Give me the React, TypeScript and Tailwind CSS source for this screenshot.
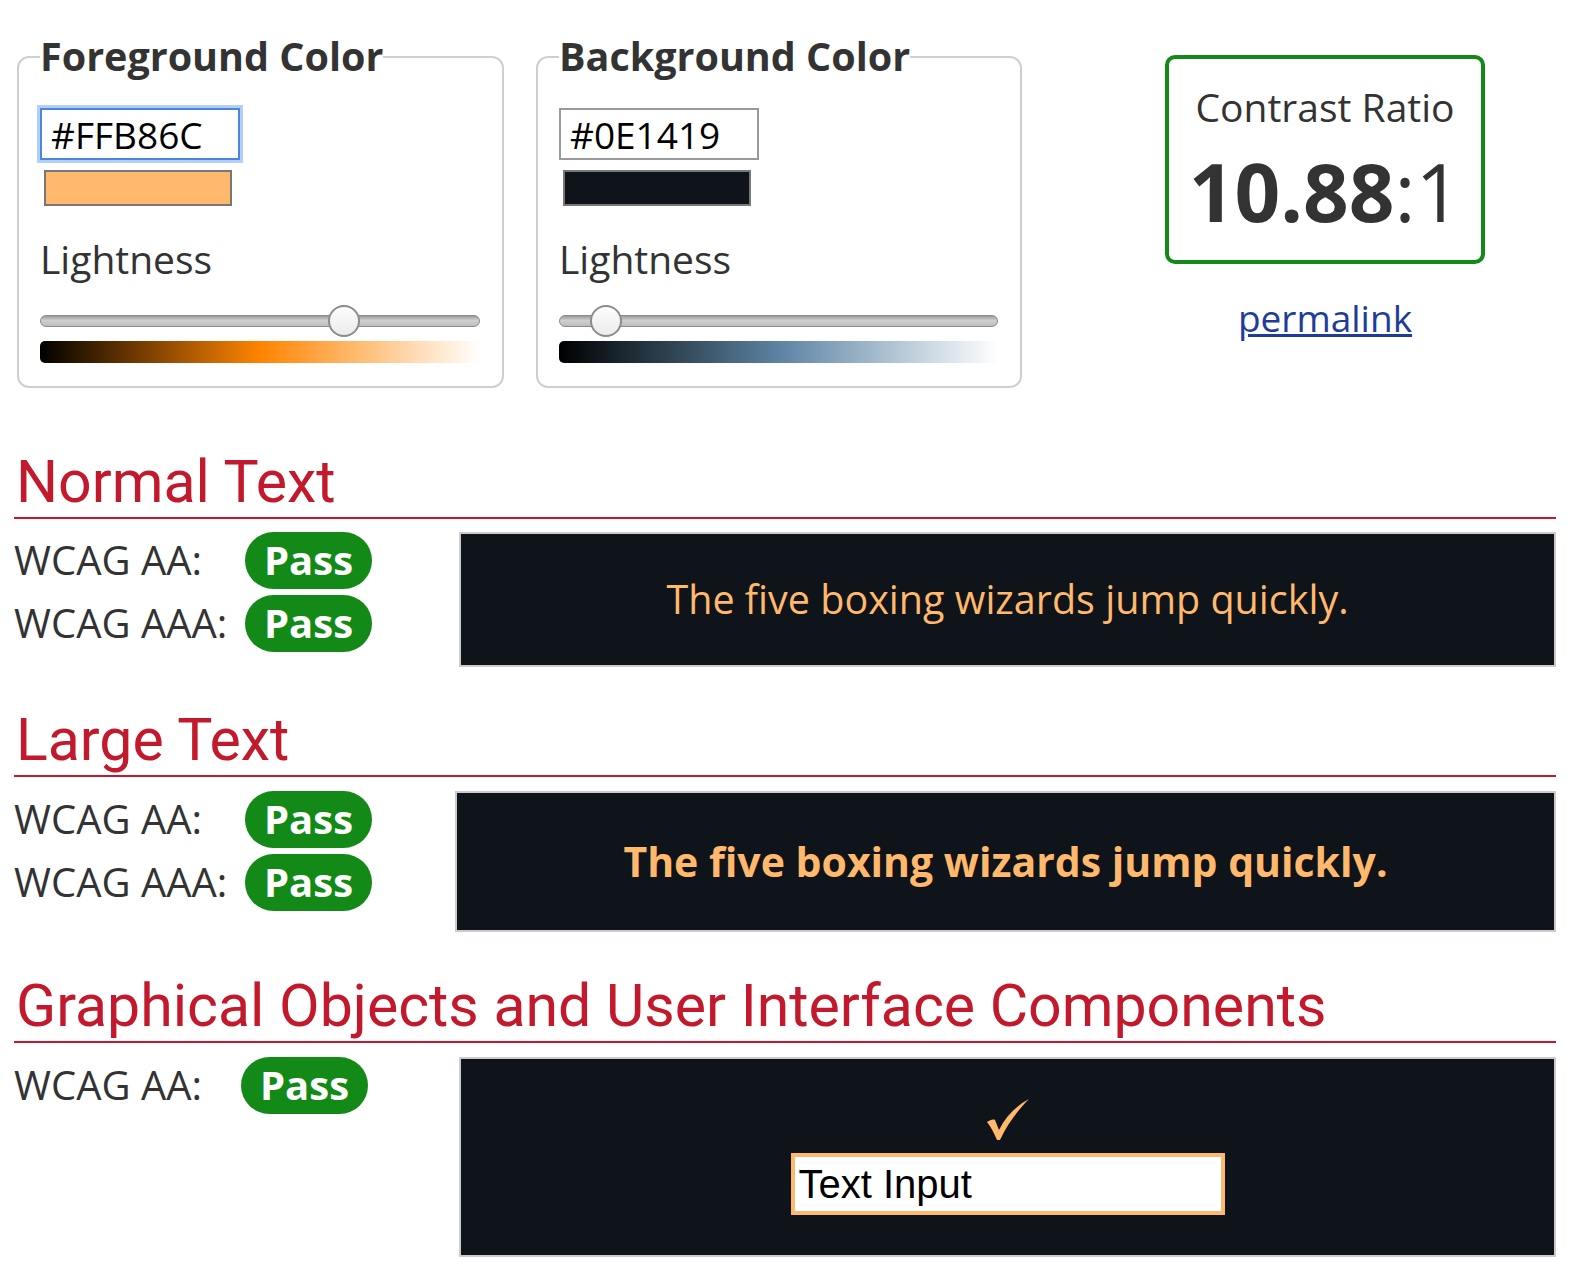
import React from "react";

const FG = "#FFB86C";

function Slider({ pos }: { pos: number }) {
  return (
    <div className="relative mt-[16px] flex h-[32px] items-center">
      <div className="h-[12px] w-full rounded-full border border-[#8a8a8a] bg-[linear-gradient(to_bottom,#9c9c9c,#cfcfcf_45%,#bdbdbd)]" />
      {/* thumb sits over the track */}
      <div
        className="absolute top-0 h-[32px] w-[32px] rounded-full border-2 border-[#8c8c8c] bg-[linear-gradient(to_bottom,#fdfdfd,#ebebeb)]"
        style={{ left: pos }}
      />
    </div>
  );
}

function ColorField({
  title,
  value,
  focused,
  swatch,
  gradient,
  thumb,
  width,
}: {
  title: string;
  value: string;
  focused?: boolean;
  swatch: string;
  gradient: string;
  thumb: number;
  width: string;
}) {
  return (
    <fieldset className={`${width} rounded-[12px] border-2 border-[#cfcfcf] pl-[21px] pr-[22px] pb-[23px]`}>
      <legend className="text-[39.5px] font-bold leading-normal text-[#333]">{title}</legend>
      <div
        className={`mt-[22px] flex h-[52px] w-[200px] items-center pl-[9px] text-[37px] text-black ${
          focused
            ? "border-2 border-[#4a86e0] shadow-[0_0_0_3px_#b3cff7]"
            : "border-2 border-[#9a9a9a]"
        }`}
      >
        {value}
      </div>
      <div className={`ml-[4px] mt-[10px] h-[36px] w-[188px] border-2 border-[#777] ${swatch}`} />
      <div className="mt-[24px] text-[39px] leading-normal text-[#333]">Lightness</div>
      <Slider pos={thumb} />
      <div className={`mt-[4px] h-[22px] rounded-l-[5px] ${gradient}`} />
    </fieldset>
  );
}

function Badge() {
  return (
    <span className="inline-flex h-[57px] w-[127px] items-center justify-center rounded-full bg-[#138a17] text-[40px] font-bold text-white">
      Pass
    </span>
  );
}

function Row({ label, labelW }: { label: string; labelW: string }) {
  return (
    <div className="flex h-[57px] items-center">
      <span className={`${labelW} text-[40px] text-[#333]`}>{label}</span>
      <Badge />
    </div>
  );
}

function Heading({ children, mt }: { children: React.ReactNode; mt: string }) {
  return (
    <h2
      className={`${mt} border-b-2 border-[#c21a2c] pl-[2px] font-['Roboto',sans-serif] text-[59px] leading-[70px] text-[#c21a2c]`}
    >
      {children}
    </h2>
  );
}

export default function App() {
  return (
    <div className="min-h-screen bg-white pl-[14px] pr-[18px] pt-[27px] pb-[26px] font-['Open_Sans',sans-serif] text-[#333]">
      {/* top: colour pickers and ratio */}
      <div className="flex items-start pl-[3px]">
        <ColorField
          title="Foreground Color"
          value="#FFB86C"
          focused
          swatch="bg-[#FFB86C]"
          gradient="bg-[linear-gradient(to_right,#000,#ff8400_50%,#fff)]"
          thumb={288}
          width="w-[487px]"
        />
        <div className="ml-[32px]">
          <ColorField
            title="Background Color"
            value="#0E1419"
            swatch="bg-[#0E1419]"
            gradient="bg-[linear-gradient(to_right,#000,#5c83a3_50%,#fff)]"
            thumb={31}
            width="w-[486px]"
          />
        </div>
        <div className="ml-[143px] mt-[28px] flex w-[320px] flex-col items-center">
          <div className="flex h-[209px] w-full flex-col items-center rounded-[10px] border-4 border-[#138a17] pt-[19px]">
            <div className="text-[39px] leading-normal text-[#333]">Contrast Ratio</div>
            <div className="mt-[14px] text-[80px] font-bold leading-none text-[#333]">
              10.88<span className="font-normal">:1</span>
            </div>
          </div>
          <a href="#" className="mt-[26px] text-[37px] leading-normal text-[#1e3d9a] underline">
            permalink
          </a>
        </div>
      </div>

      {/* normal text */}
      <Heading mt="mt-[59px]">Normal Text</Heading>
      <div className="mt-[13px] flex">
        <div className="flex w-[445px] flex-col gap-[6px]">
          <Row label="WCAG AA:" labelW="w-[231px]" />
          <Row label="WCAG AAA:" labelW="w-[231px]" />
        </div>
        <div className="flex h-[135px] flex-1 items-center justify-center border-2 border-[#cccccc] bg-[#0E1419]">
          <span className="text-[39.5px] text-[#FFB86C]">The five boxing wizards jump quickly.</span>
        </div>
      </div>

      {/* large text */}
      <Heading mt="mt-[38px]">Large Text</Heading>
      <div className="mt-[14px] flex">
        <div className="flex w-[441px] flex-col gap-[6px]">
          <Row label="WCAG AA:" labelW="w-[231px]" />
          <Row label="WCAG AAA:" labelW="w-[231px]" />
        </div>
        <div className="flex h-[141px] flex-1 items-center justify-center border-2 border-[#cccccc] bg-[#0E1419]">
          <span className="text-[41px] font-bold text-[#FFB86C]">The five boxing wizards jump quickly.</span>
        </div>
      </div>

      {/* graphical objects */}
      <Heading mt="mt-[39px]">Graphical Objects and User Interface Components</Heading>
      <div className="mt-[14px] flex">
        <div className="flex w-[445px] flex-col">
          <Row label="WCAG AA:" labelW="w-[227px]" />
        </div>
        <div className="flex h-[200px] flex-1 flex-col items-center justify-center border-2 border-[#cccccc] bg-[#0E1419]">
          <svg width="44" height="42" viewBox="0 0 44 42">
            <path
              d="M1 23 C4 21 7 20 9 21 L13 31 C20 17 30 7 43 0 C33 10 22 24 14 41 L11 41 C8 34 5 28 1 23 Z"
              fill={FG}
            />
          </svg>
          <div className="mt-[12px] flex h-[62px] w-[434px] items-center border-4 border-[#FFB86C] bg-white pl-[4px] font-['Liberation_Sans',Arial,sans-serif] text-[40px] text-black">
            Text Input
          </div>
        </div>
      </div>
    </div>
  );
}
